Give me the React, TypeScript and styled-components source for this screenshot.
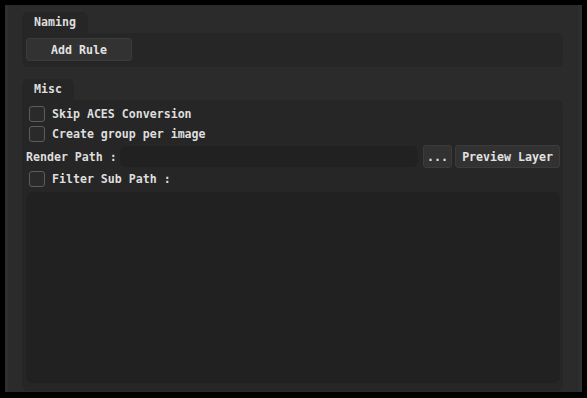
import React from 'react';
import styled, { createGlobalStyle } from 'styled-components';

const GlobalStyle = createGlobalStyle`
  html, body {
    margin: 0;
    padding: 0;
    background: #000;
  }
  * {
    box-sizing: border-box;
  }
`;

const Screen = styled.div`
  width: 587px;
  height: 398px;
  background: #000;
  padding: 5px 5px 6px 5px;
  font-family: 'DejaVu Sans Mono', 'Liberation Mono', monospace;
  font-weight: bold;
  font-size: 11.6px;
  color: #dedede;
`;

const Window = styled.div`
  height: 100%;
  background: #2b2b2b;
  border-left: 3px solid #2f2f2f;
  border-right: 3px solid #2f2f2f;
  padding: 7px 16px 1px 14px;
  display: flex;
  flex-direction: column;
`;

const Group = styled.section<{ grow?: boolean }>`
  display: flex;
  flex-direction: column;
  align-items: flex-start;
  flex: ${p => (p.grow ? 1 : 'none')};
  margin-bottom: ${p => (p.grow ? 0 : 12)}px;
`;

const Tab = styled.div`
  height: 21px;
  line-height: 21px;
  padding: 0 12px 0 12px;
  background: #262626;
  border-radius: 6px 6px 0 0;
`;

const Body = styled.div<{ grow?: boolean }>`
  align-self: stretch;
  flex: ${p => (p.grow ? 1 : 'none')};
  background: #262626;
  border-radius: 0 6px 6px 6px;
  padding: ${p => (p.grow ? '4px 3px 8px 4px' : '5px 4px 6px 4px')};
  display: flex;
  flex-direction: column;
`;

const Button = styled.button<{ w: number }>`
  width: ${p => p.w}px;
  height: 23px;
  padding: 0;
  flex: none;
  background: #323232;
  border: 1px solid #3b3b3b;
  border-radius: 3px;
  color: #e2e2e2;
  font: inherit;
  cursor: pointer;
`;

const CheckRow = styled.label`
  height: 20px;
  display: flex;
  align-items: center;
  gap: 7px;
  padding-left: 3px;
`;

const Box = styled.span`
  width: 16px;
  height: 16px;
  border: 1px solid #5c5c5c;
  border-radius: 3px;
  background: #2a2a2a;
`;

const PathRow = styled.div`
  height: 23px;
  margin: 1px 0;
  display: flex;
  align-items: center;
`;

const PathLabel = styled.span`
  margin-right: 3px;
  white-space: pre;
`;

const PathInput = styled.div`
  flex: 1;
  height: 21px;
  margin-right: 5px;
  background: #212121;
  border-radius: 6px;
`;

const TextArea = styled.div`
  flex: 1;
  margin-top: 3px;
  background: #212121;
  border-radius: 7px;
`;

const Check = ({ label }: { label: string }) => (
  <CheckRow>
    <Box />
    {label}
  </CheckRow>
);

export default function App() {
  return (
    <Screen>
      <GlobalStyle />
      <Window>
        <Group>
          <Tab>Naming</Tab>
          <Body>
            <Button w={106}>Add Rule</Button>
          </Body>
        </Group>
        <Group grow>
          <Tab>Misc</Tab>
          <Body grow>
            <Check label="Skip ACES Conversion" />
            <Check label="Create group per image" />
            <PathRow>
              <PathLabel>Render Path :</PathLabel>
              <PathInput />
              <Button w={29} style={{ marginRight: 3 }}>...</Button>
              <Button w={105}>Preview Layer</Button>
            </PathRow>
            <Check label="Filter Sub Path :" />
            <TextArea />
          </Body>
        </Group>
      </Window>
    </Screen>
  );
}
